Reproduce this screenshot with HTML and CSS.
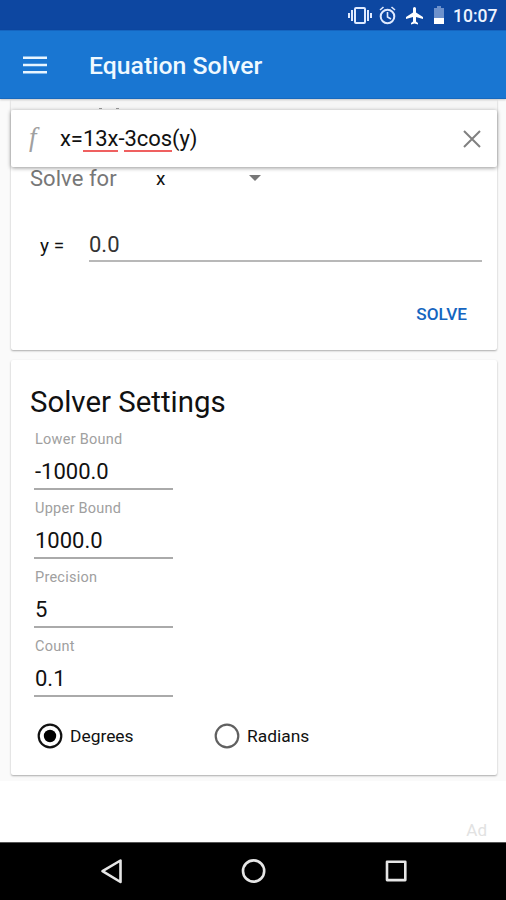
FILE: index.html
```html
<!DOCTYPE html>
<html lang="en">
<head>
<meta charset="utf-8">
<title>Equation Solver</title>
<link rel="stylesheet" href="styles.css">
</head>
<body>
<div class="screen">
  <header class="status">
    <svg class="status-icons" width="100" height="30" viewBox="0 0 100 30">
      <g fill="none" stroke="#dfeaff" stroke-width="2">
        <rect x="8" y="8" width="10" height="15" rx="1"/>
        <path d="M5 10v11M2 13v5M21 10v11M24 13v5"/>
        <circle cx="40.500" cy="16.500" r="6.800"/>
        <path d="M40.500 12v5l3.500 2M33 10l3.500-3M48 10l-3.500-3" stroke-width="1.600"/>
      </g>
      <path fill="#fff" d="M76 19v-2l-7-4.500V8.500a1.500 1.500 0 0 0-3 0v4L59 17v2l7-2v4.500l-2 1.500v1.500l3.500-1 3.500 1V23l-2-1.500V17z"/>
      <path fill="#6d91cc" d="M87 8h3V6h4v2h3v10H87z"/>
      <path fill="#fff" d="M87 18h10v6H87z"/>
    </svg>
    <span class="clock">10:07</span>
  </header>
  <div class="appbar">
    <svg class="menu" width="24" height="18" viewBox="0 0 24 18"><path d="M0 1.700h24M0 9h24M0 16.300h24" stroke="#e8f5ff" stroke-width="2.600"/></svg>
    <h1>Equation Solver</h1>
  </div>
  <main class="content">
    <section class="card equation">
      <div class="formula">
        <span class="fn">f</span>
        <span class="expr">x=<u>13x</u>-<u>3cos</u>(y)</span>
        <svg class="clear" width="18" height="18" viewBox="0 0 18 18"><path d="M1 1l16 16M17 1L1 17" stroke="#808080" stroke-width="2"/></svg>
      </div>
      <div class="peek"><i></i><i></i></div>
      <div class="solve-for">
        <span class="caption">Solve for</span>
        <span class="variable">x</span>
        <span class="arrow"></span>
      </div>
      <div class="known">
        <span class="name">y =</span>
        <span class="value">0.0</span>
      </div>
      <div class="action">SOLVE</div>
    </section>
    <section class="card settings">
      <h2>Solver Settings</h2>
      <div class="field"><label>Lower Bound</label><span>-1000.0</span></div>
      <div class="field"><label>Upper Bound</label><span>1000.0</span></div>
      <div class="field"><label>Precision</label><span>5</span></div>
      <div class="field"><label>Count</label><span>0.1</span></div>
      <div class="radios">
        <div class="choice"><svg width="26" height="26" viewBox="0 0 26 26"><circle cx="13" cy="13" r="11.300" fill="none" stroke="#111" stroke-width="2.200"/><circle cx="13" cy="13" r="6.200"/></svg><span>Degrees</span></div>
        <div class="choice"><svg width="26" height="26" viewBox="0 0 26 26"><circle cx="13" cy="13" r="11.300" fill="none" stroke="#606060" stroke-width="2.200"/></svg><span>Radians</span></div>
      </div>
    </section>
  </main>
  <div class="ad">Ad</div>
  <nav class="nav">
    <svg width="506" height="58" viewBox="0 0 506 58" fill="none" stroke="#e6e6e6" stroke-width="2.600" stroke-linejoin="round">
      <path d="M120.500 17.500v21.500L102.500 28.200z"/>
      <circle cx="253.600" cy="28" r="10.600"/>
      <rect x="387" y="18.800" width="18.300" height="18.300"/>
    </svg>
  </nav>
</div>
</body>
</html>
```

FILE: styles.css
```css
* { box-sizing: border-box; }
body { margin: 0; font-family: Roboto, "Liberation Sans", sans-serif; color: #111; }
h1, h2 { margin: 0; }
.screen { width: 506px; height: 900px; display: flex; flex-direction: column; overflow: hidden; background: #fff; }

.status { height: 30px; flex: none; display: flex; justify-content: flex-end; background: #0d47a1; }
.status-icons { display: block; flex: none; }
.clock { width: 59px; padding-left: 6px; font-size: 17.500px; font-weight: 500; line-height: 32px; color: #eef3ff; }

.appbar { height: 69px; flex: none; display: flex; align-items: center; padding-left: 23px; background: #1976d2; border-top: 1px solid #1565c0; border-bottom: 1px solid #1769be; position: relative; z-index: 2; box-shadow: 0 1px 2px rgba(0, 0, 0, .2); }
.appbar h1 { margin: 3px 0 0 42px; font-size: 24.800px; font-weight: 500; line-height: 32px; color: #eff9ff; }

.content { height: 682px; flex: none; padding: 0 9px 0 11px; background: #fafafa; }
.card { background: #fff; border-radius: 2px; box-shadow: 0 1px 2px rgba(0, 0, 0, .32); }
.equation { height: 251px; position: relative; }
.formula { position: absolute; top: 11px; left: 0; width: 486px; height: 57px; display: flex; align-items: center; background: #fff; border-radius: 2px; box-shadow: 0 1px 4px rgba(0, 0, 0, .42); }
.fn { width: 49px; padding: 0 0 4px 18px; font: italic 27px/30px "Liberation Serif", serif; color: #a0a0a0; }
.expr { flex: 1; padding-top: 1px; font-size: 22px; line-height: 28px; letter-spacing: -.05px; }
.expr u { text-decoration: none; box-shadow: 0 2px #ef6060; display: inline-block; height: 25px; line-height: 28px; vertical-align: top; }
.clear { margin: 0 16px 0 0; }
.peek { height: 11px; padding: 9px 0 0 88px; display: flex; gap: 14px; background: #f6f6f6; }
.peek i { width: 3px; height: 1px; background: #999; }
.solve-for { height: 96px; padding-top: 56px; display: flex; align-items: flex-start; }
.caption { width: 133px; padding-left: 19px; font-size: 22px; line-height: 26px; color: #777; letter-spacing: .05px; }
.variable { width: 105px; padding-left: 12px; font-size: 19px; line-height: 26px; }
.arrow { margin-top: 9px; border: 6px solid transparent; border-top-color: #777; border-bottom: 0; }
.known { height: 56px; margin: 0 15px 0 28px; display: flex; align-items: flex-end; }
.name { width: 50px; padding-left: 1px; font-size: 19px; line-height: 32px; }
.value { flex: 1; height: 35px; border-bottom: 2px solid #b8b8b8; font-size: 22px; line-height: 36px; color: #333; }
.action { margin-top: 40px; padding-right: 30px; text-align: right; font-size: 17.200px; font-weight: 500; line-height: 24px; color: #1565c0; }

.settings { height: 415px; margin-top: 10px; padding: 25px 0 0 19px; }
.settings h2 { font-size: 29.400px; font-weight: 400; line-height: 34px; }
.field { width: 139px; height: 69px; margin-left: 4px; padding-left: 1px; display: flex; flex-direction: column; justify-content: flex-end; border-bottom: 2px solid #aaa; }
.settings h2 + .field { height: 71px; }
.field label { font-size: 14.500px; line-height: 18px; color: #a0a0a0; letter-spacing: .25px; }
.field span { margin-top: 7px; font-size: 22px; line-height: 32px; }
.radios { display: flex; padding: 25px 0 0 7px; }
.choice { width: 177px; display: flex; align-items: center; gap: 7px; font-size: 17.400px; line-height: 27px; }
.choice span { padding-top: 1px; }

.ad { height: 61px; flex: none; padding: 39px 19px 0 0; text-align: right; font-size: 17px; line-height: 20px; color: #e2e2e2; }
.nav { height: 58px; flex: none; background: #000; border-top: 1px solid #555; }
.nav svg { display: block; }
```
